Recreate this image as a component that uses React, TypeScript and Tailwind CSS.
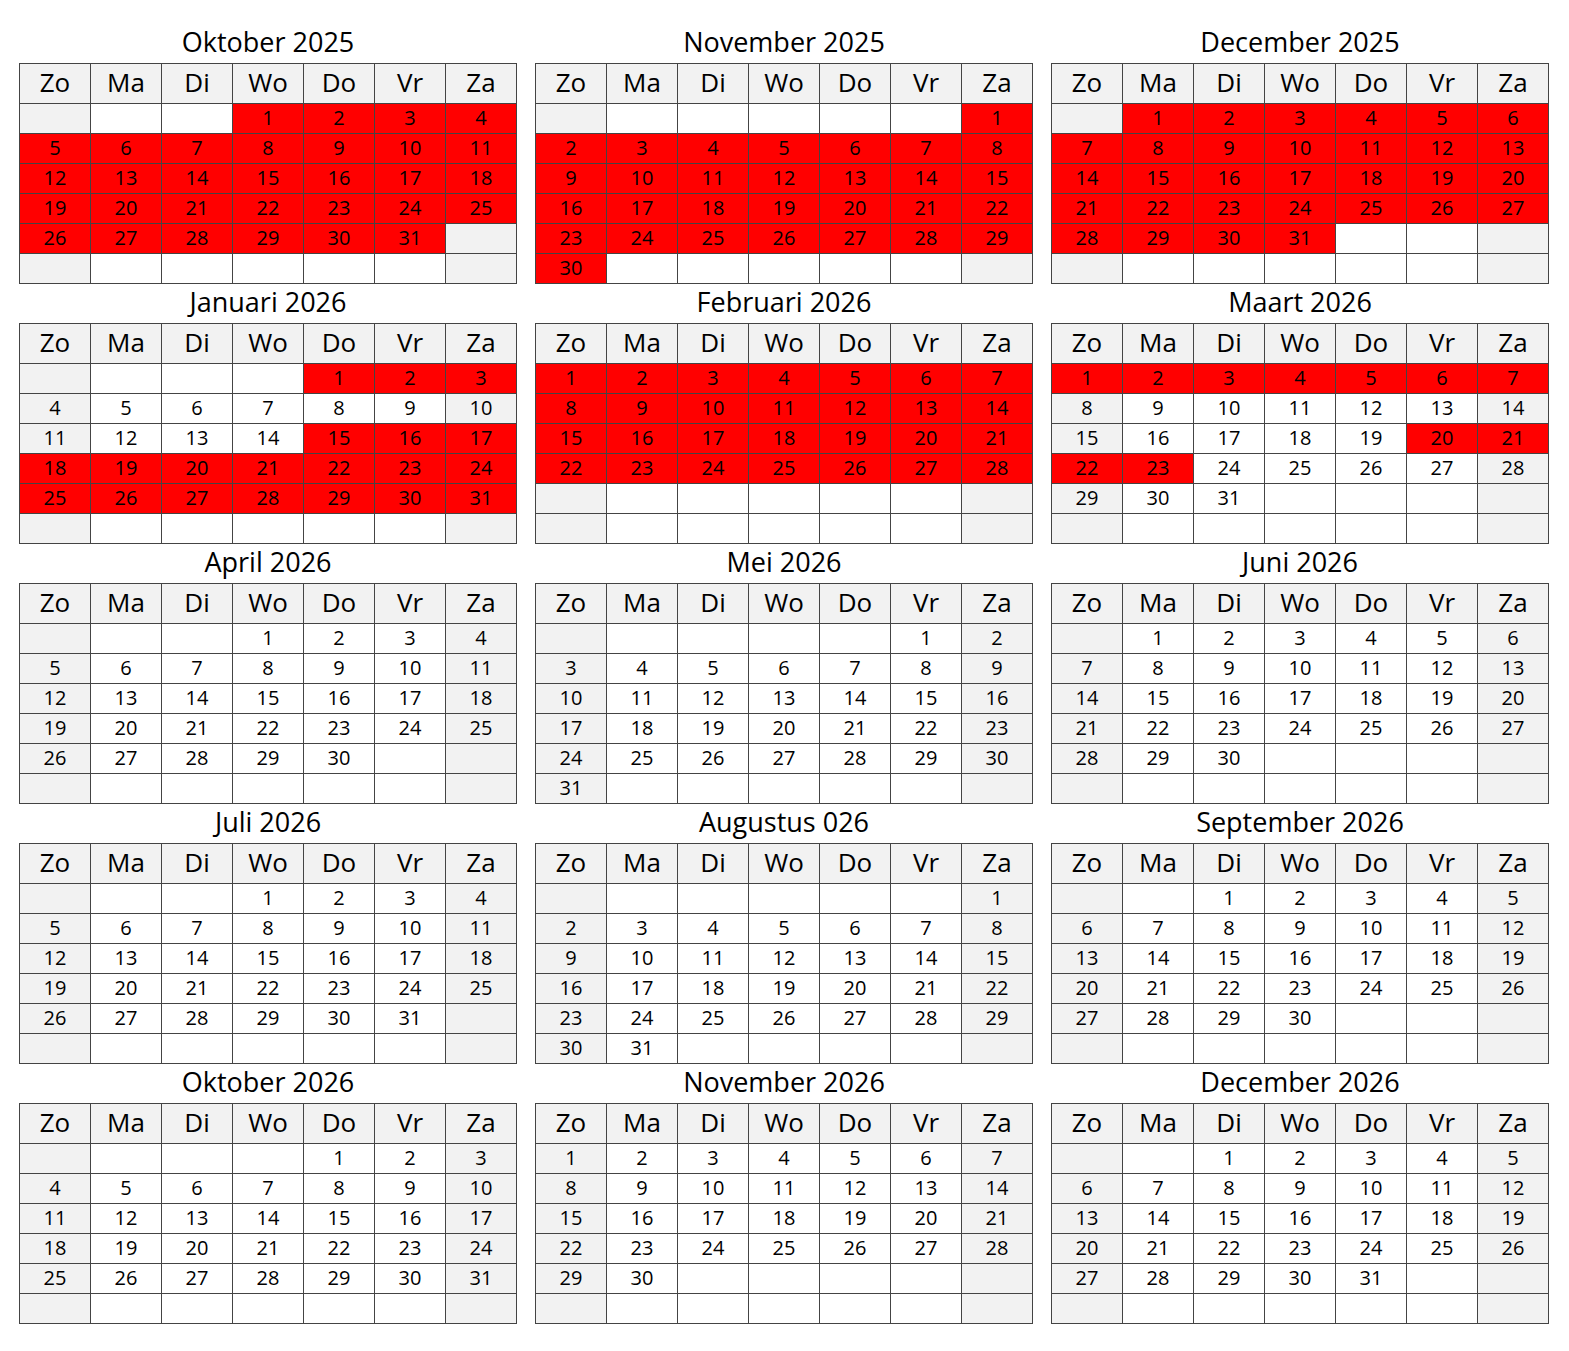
import React from "react";

const MONTHS = [
  "Januari", "Februari", "Maart", "April", "Mei", "Juni",
  "Juli", "Augustus", "September", "Oktober", "November", "December",
];
const DAYS = ["Zo", "Ma", "Di", "Wo", "Do", "Vr", "Za"];

type M = { year: number; month: number; title: string };

const list: M[] = [];
for (let i = 0; i < 15; i++) {
  const m = (9 + i) % 12;
  const y = 2025 + Math.floor((9 + i) / 12);
  let title = `${MONTHS[m]} ${y}`;
  if (m === 7 && y === 2026) title = "Augustus 026";
  list.push({ year: y, month: m, title });
}

function isRed(y: number, m: number, d: number): boolean {
  if (y === 2025 && (m === 9 || m === 10 || m === 11)) return true;
  if (y === 2026 && m === 0) return d <= 3 || d >= 15;
  if (y === 2026 && m === 1) return true;
  if (y === 2026 && m === 2) return d <= 7 || (d >= 20 && d <= 23);
  return false;
}

function Month({ year, month, title }: M) {
  const first = new Date(year, month, 1).getDay();
  const count = new Date(year, month + 1, 0).getDate();
  const cells: React.ReactNode[] = [];
  for (let i = 0; i < 42; i++) {
    const d = i - first + 1;
    const valid = d >= 1 && d <= count;
    const col = i % 7;
    let bg = "bg-white";
    if (valid && isRed(year, month, d)) bg = "bg-[#ff0000]";
    else if (col === 0 || col === 6) bg = "bg-[#f2f2f2]";
    cells.push(
      <div
        key={i}
        className={`h-[30px] pb-[2px] border-r border-b border-[#444444] flex items-center justify-center text-[20px] leading-none ${bg}`}
      >
        {valid ? d : ""}
      </div>
    );
  }
  return (
    <div className="flex flex-col">
      <div className="h-[39px] pb-[4px] flex items-center justify-center text-[27px] leading-none text-black">
        {title}
      </div>
      <div className="grid grid-cols-[repeat(7,71px)] border-l border-t border-[#444444]">
        {DAYS.map((d) => (
          <div
            key={d}
            className="h-[40px] pb-[3px] border-r border-b border-[#444444] bg-[#f2f2f2] flex items-center justify-center text-[26px] leading-none"
          >
            {d}
          </div>
        ))}
        {cells}
      </div>
    </div>
  );
}

export default function App() {
  return (
    <div
      className="bg-white text-black pl-[19px] pt-[24px] pb-[28px] min-h-[1351px]"
      style={{ fontFamily: '"Open Sans", "Noto Sans", sans-serif' }}
    >
      <div className="grid grid-cols-[498px_498px_498px] gap-x-[18px]">
        {list.map((m) => (
          <Month key={m.title} {...m} />
        ))}
      </div>
    </div>
  );
}
